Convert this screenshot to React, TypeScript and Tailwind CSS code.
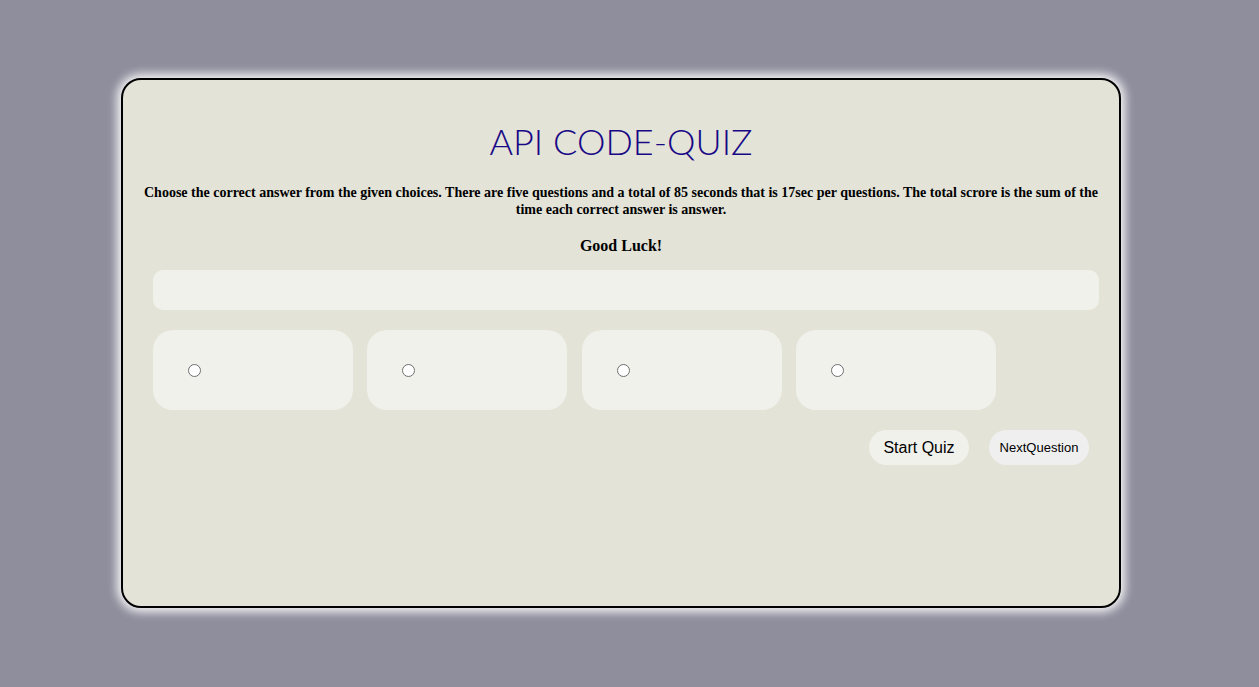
export default function App() {
  const choices = [1, 2, 3, 4];

  return (
    <div className="min-h-[687px] w-full bg-[#8f8e9d] pt-[78px]">
      <div className="ml-[121px] h-[530px] w-[1000px] rounded-[20px] border-2 border-black bg-[#e3e3d8] shadow-[0_0_10px_4px_rgba(255,255,255,0.9)]">
        <h1 className="mt-[40px] text-center font-['Lato',sans-serif] text-[36px] font-light leading-[43px] text-[#180886]">
          API CODE-QUIZ
        </h1>
        <p className="mx-[20px] mt-[21px] text-center font-['Liberation_Serif',serif] text-[14px] font-bold leading-[17px] text-black">
          Choose the correct answer from the given choices. There are five questions and a total of 85 seconds that is 17sec per questions. The total scrore is the sum of the time each correct answer is answer.
        </p>
        <p className="mt-[19px] text-center font-['Liberation_Serif',serif] text-[16px] font-bold leading-[18px] text-black">
          Good Luck!
        </p>
        <div className="ml-[30px] mt-[15px] h-[40px] w-[946px] rounded-[10px] bg-[#f0f1eb]" />
        <div className="ml-[30px] mt-[20px] flex gap-[14.3px]">
          {choices.map((c) => (
            <label
              key={c}
              className="flex h-[80px] w-[200px] items-center rounded-[20px] bg-[#f0f1eb] pl-[35px]"
            >
              <input
                type="radio"
                name="choice"
                className="m-0 h-[13px] w-[13px] appearance-none rounded-full border border-[#6f6f6f] bg-white"
              />
            </label>
          ))}
        </div>
        <div className="mr-[30px] mt-[20px] flex justify-end gap-[20px]">
          <button className="h-[35px] w-[100px] rounded-full bg-[#f0f1eb] font-['Liberation_Sans',sans-serif] text-[16px] text-black">
            Start Quiz
          </button>
          <button className="h-[35px] w-[100px] rounded-full bg-[#efefef] font-['Liberation_Sans',sans-serif] text-[13px] text-black">
            NextQuestion
          </button>
        </div>
      </div>
    </div>
  );
}
